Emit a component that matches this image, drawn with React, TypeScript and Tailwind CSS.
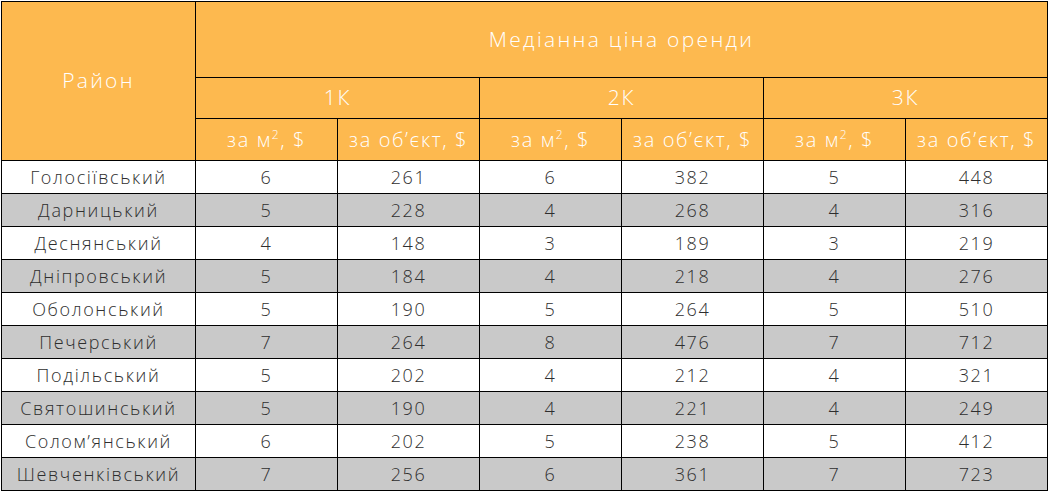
const rows: [string, number, number, number, number, number, number][] = [
  ['Голосіївський', 6, 261, 6, 382, 5, 448],
  ['Дарницький', 5, 228, 4, 268, 4, 316],
  ['Деснянський', 4, 148, 3, 189, 3, 219],
  ['Дніпровський', 5, 184, 4, 218, 4, 276],
  ['Оболонський', 5, 190, 5, 264, 5, 510],
  ['Печерський', 7, 264, 8, 476, 7, 712],
  ['Подільський', 5, 202, 4, 212, 4, 321],
  ['Святошинський', 5, 190, 4, 221, 4, 249],
  ['Солом’янський', 6, 202, 5, 238, 5, 412],
  ['Шевченківський', 7, 256, 6, 361, 7, 723],
];

function PerMeter() {
  return (
    <>
      за м<sup className="text-[12px] -top-[0.6em]">2</sup>, $
    </>
  );
}

export default function App() {
  const head = 'border border-black bg-[#fdb94f] text-white font-light';
  const cell = 'border border-black h-[33px] p-0 text-center';
  return (
    <div className="w-[1049px] h-[492px] bg-white pl-px pt-px font-['Open_Sans',sans-serif]">
      <table className="border-collapse table-fixed w-[1047px] text-[#2e2e2e]">
        <colgroup>
          <col className="w-[194px]" />
          <col className="w-[142px]" />
          <col className="w-[142px]" />
          <col className="w-[142px]" />
          <col className="w-[142px]" />
          <col className="w-[142px]" />
          <col className="w-[142px]" />
        </colgroup>
        <thead>
          <tr className="h-[76px]">
            <th rowSpan={3} className={`${head} text-[21px] tracking-[0.11em]`}>
              Район
            </th>
            <th colSpan={6} className={`${head} text-[21px] tracking-[0.11em]`}>
              Медіанна ціна оренди
            </th>
          </tr>
          <tr className="h-[41px]">
            {['1К', '2К', '3К'].map((k) => (
              <th key={k} colSpan={2} className={`${head} text-[21px] tracking-[0.08em]`}>
                {k}
              </th>
            ))}
          </tr>
          <tr className="h-[42px]">
            {[0, 1, 2].map((i) => (
              <>
                <th key={`m${i}`} className={`${head} text-[20px] tracking-[0.08em]`}>
                  <PerMeter />
                </th>
                <th key={`o${i}`} className={`${head} text-[20px] tracking-[0.08em] px-0`}>
                  за об’єкт, $
                </th>
              </>
            ))}
          </tr>
        </thead>
        <tbody className="text-[18px] font-light tracking-[0.09em]">
          {rows.map((r, i) => (
            <tr key={r[0]} className={i % 2 ? 'bg-[#c9c9c9]' : 'bg-white'}>
              {r.map((v, j) => (
                <td key={j} className={cell}>
                  {v}
                </td>
              ))}
            </tr>
          ))}
        </tbody>
      </table>
    </div>
  );
}
